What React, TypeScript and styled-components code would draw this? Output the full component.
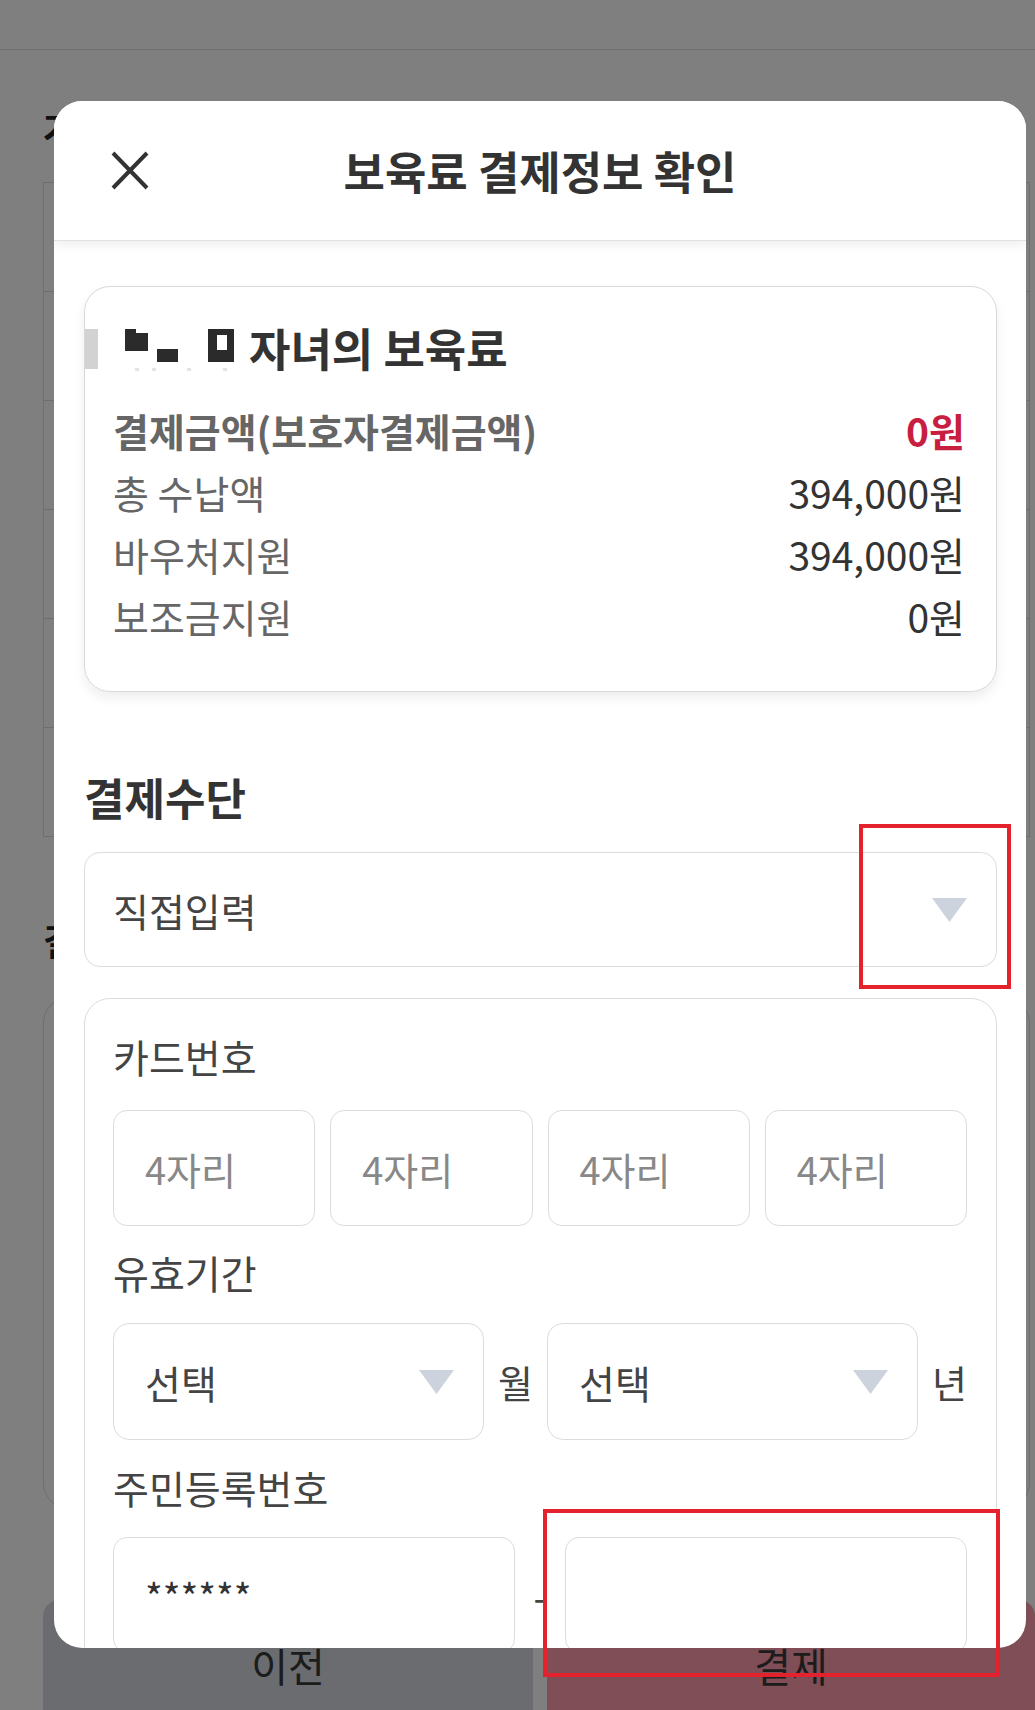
import React from 'react'
import styled, { createGlobalStyle } from 'styled-components'

const GlobalStyle = createGlobalStyle`
  html, body {
    margin: 0;
    padding: 0;
  }
  body {
    font-family: 'Noto Sans CJK KR', 'Noto Sans', sans-serif;
    background: #fff;
    color: #333;
  }
  * {
    box-sizing: border-box;
  }
`

const Screen = styled.div`
  position: relative;
  width: 1035px;
  height: 1710px;
  overflow: hidden;
  background: #fff;
`

/* ---------- page behind the dialog ---------- */

const Page = styled.div`
  display: flex;
  flex-direction: column;
  height: 100%;
`
const TopBar = styled.div`
  height: 50px;
  flex-shrink: 0;
  border-bottom: 1px solid #dcdcdc;
`
const PageBody = styled.div`
  display: flex;
  flex-direction: column;
  padding: 0 5px 0 43px;
`
const PageHeading = styled.h2<{ $top: number }>`
  margin: ${(p) => p.$top}px 0 0;
  font-size: 36px;
  line-height: 44px;
  font-weight: 700;
  color: #222;
`
const Table = styled.div`
  margin-top: 33px;
  border-top: 1px solid #dcdcdc;
  border-left: 1px solid #dcdcdc;
  border-right: 1px solid #dcdcdc;
`
const TableRow = styled.div`
  height: 109px;
  border-bottom: 1px solid #dcdcdc;
`
const InfoBox = styled.div`
  margin-top: 35px;
  height: 512px;
  border: 1px solid #dcdcdc;
  border-radius: 26px;
`
const ButtonBar = styled.div`
  margin-top: auto;
  display: grid;
  grid-template-columns: 490px 1fr;
  column-gap: 14px;
  padding-left: 43px;
  height: 110px;
`
const PageButton = styled.div<{ $primary?: boolean }>`
  background: ${(p) => (p.$primary ? '#ff9cac' : '#d6d8e0')};
  border-radius: ${(p) => (p.$primary ? '0 16px 0 0' : '16px 0 0 0')};
  display: flex;
  justify-content: center;
  padding-top: 40px;
  font-size: 40px;
  line-height: 50px;
  color: #383838;
`

/* ---------- dialog ---------- */

const Dim = styled.div`
  position: absolute;
  inset: 0;
  background: rgba(0, 0, 0, 0.5);
`
const Dialog = styled.div`
  position: absolute;
  left: 54px;
  top: 101px;
  width: 972px;
  height: 1547px;
  background: #fff;
  border-radius: 28px;
  overflow: hidden;
  display: flex;
  flex-direction: column;
`
const DialogHeader = styled.div`
  position: relative;
  z-index: 1;
  height: 140px;
  flex-shrink: 0;
  display: grid;
  grid-template-columns: 1fr auto 1fr;
  align-items: center;
  background: #fff;
  border-bottom: 1px solid #e2e2e2;
  box-shadow: 0 4px 10px rgba(0, 0, 0, 0.07);
`
const CloseButton = styled.div`
  padding-left: 57px;
  display: flex;
  align-items: center;
`
const DialogTitle = styled.h1`
  margin: 0;
  font-size: 45px;
  line-height: 1;
  font-weight: 700;
  color: #333;
`
const DialogBody = styled.div`
  padding: 45px 29px 0 30px;
`

const SummaryCard = styled.div`
  border: 1px solid #d8d8d8;
  border-radius: 26px;
  padding: 36px 31px 44px 28px;
  box-shadow: 0 6px 12px rgba(0, 0, 0, 0.07);
`
const CardTitle = styled.div`
  display: flex;
  align-items: center;
  margin-left: -28px;
  font-size: 45px;
  line-height: 50px;
  font-weight: 700;
  color: #333;
`
const Rows = styled.div`
  margin-top: 26px;
`
const Row = styled.div`
  display: flex;
  justify-content: space-between;
  font-size: 39px;
  line-height: 62px;
`
const RowLabel = styled.span<{ $strong?: boolean }>`
  color: #666;
  font-weight: ${(p) => (p.$strong ? 700 : 400)};
`
const RowValue = styled.span<{ $accent?: boolean }>`
  color: ${(p) => (p.$accent ? '#c81e3f' : '#333')};
  font-weight: ${(p) => (p.$accent ? 700 : 400)};
`

const SectionLabel = styled.div`
  margin: 80px 0 30px;
  font-size: 44px;
  line-height: 50px;
  font-weight: 700;
  color: #333;
`
const SelectBox = styled.div<{ $height: number; $pad: number }>`
  height: ${(p) => p.$height}px;
  border: 1px solid #dcdcdc;
  border-radius: 16px;
  padding: 0 29px 0 ${(p) => p.$pad}px;
  display: flex;
  align-items: center;
  justify-content: space-between;
  font-size: 39px;
  color: #444;
`

const FormCard = styled.div`
  margin-top: 31px;
  border: 1px solid #dcdcdc;
  border-radius: 26px;
  padding: 32px 29px 60px 28px;
`
const FieldLabel = styled.div<{ $top: number }>`
  margin: ${(p) => p.$top}px 0 0;
  font-size: 39px;
  line-height: 50px;
  color: #444;
`
const CardNumberRow = styled.div`
  margin-top: 29px;
  display: grid;
  grid-template-columns: repeat(4, 1fr);
  column-gap: 15px;
`
const ExpiryRow = styled.div`
  margin-top: 26px;
  display: grid;
  grid-template-columns: 1fr auto 1fr auto;
  column-gap: 14px;
  align-items: center;
`
const IdRow = styled.div`
  margin-top: 25px;
  display: grid;
  grid-template-columns: 1fr auto 1fr;
  column-gap: 18px;
  align-items: center;
`
const Unit = styled.span`
  font-size: 38px;
  color: #444;
`
const TextField = styled.input`
  width: 100%;
  height: 116px;
  border: 1px solid #dcdcdc;
  border-radius: 14px;
  padding: 0 0 0 31px;
  font-family: inherit;
  font-size: 38px;
  color: #333;
  background: #fff;
  outline: none;
  &::placeholder {
    color: #888;
  }
`

/* ---------- review marks drawn over the screenshot ---------- */

const Mark = styled.div<{ $l: number; $t: number; $w: number; $h: number }>`
  position: absolute;
  left: ${(p) => p.$l}px;
  top: ${(p) => p.$t}px;
  width: ${(p) => p.$w}px;
  height: ${(p) => p.$h}px;
  border: 4px solid #e3222d;
`

const CloseIcon = () => (
  <svg width="38" height="39" viewBox="0 0 38 39">
    <path d="M2 2 L36 37 M36 2 L2 37" stroke="#333" strokeWidth="4" fill="none" />
  </svg>
)

const Caret = () => (
  <svg width="35" height="24" viewBox="0 0 35 24">
    <polygon points="0,0 35,0 17.5,24" fill="#cdd3dd" />
  </svg>
)

const RedactedName = () => (
  <svg width="164" height="50" viewBox="0 0 164 50">
    <rect x="0" y="6" width="13" height="40" fill="#d2d2d2" />
    <rect x="40" y="6" width="11" height="22" fill="#2b2b2b" />
    <rect x="51" y="10" width="12" height="18" fill="#2b2b2b" />
    <rect x="72" y="26" width="21" height="13" fill="#2b2b2b" />
    <rect x="123" y="6" width="26" height="33" fill="#2b2b2b" />
    <rect x="132" y="12" width="10" height="15" fill="#fff" />
    <rect x="50" y="45" width="4" height="3" fill="#e4e4e4" />
    <rect x="67" y="45" width="4" height="3" fill="#e4e4e4" />
    <rect x="102" y="45" width="4" height="3" fill="#e4e4e4" />
    <rect x="138" y="45" width="4" height="3" fill="#e4e4e4" />
  </svg>
)

const summary = [
  { label: '총 수납액', value: '394,000원' },
  { label: '바우처지원', value: '394,000원' },
  { label: '보조금지원', value: '0원' },
]

export default function App() {
  return (
    <Screen>
      <GlobalStyle />
      <Page>
        <TopBar />
        <PageBody>
          <PageHeading $top={55}>가정보육</PageHeading>
          <Table>
            {Array.from({ length: 6 }).map((_, i) => (
              <TableRow key={i} />
            ))}
          </Table>
          <PageHeading $top={81}>결</PageHeading>
          <InfoBox />
        </PageBody>
        <ButtonBar>
          <PageButton>이전</PageButton>
          <PageButton $primary>결제</PageButton>
        </ButtonBar>
      </Page>

      <Dim />

      <Dialog>
        <DialogHeader>
          <CloseButton>
            <CloseIcon />
          </CloseButton>
          <DialogTitle>보육료 결제정보 확인</DialogTitle>
          <div />
        </DialogHeader>

        <DialogBody>
          <SummaryCard>
            <CardTitle>
              <RedactedName />
              자녀의 보육료
            </CardTitle>
            <Rows>
              <Row>
                <RowLabel $strong>결제금액(보호자결제금액)</RowLabel>
                <RowValue $accent>0원</RowValue>
              </Row>
              {summary.map((r) => (
                <Row key={r.label}>
                  <RowLabel>{r.label}</RowLabel>
                  <RowValue>{r.value}</RowValue>
                </Row>
              ))}
            </Rows>
          </SummaryCard>

          <SectionLabel>결제수단</SectionLabel>
          <SelectBox $height={115} $pad={28}>
            직접입력
            <Caret />
          </SelectBox>

          <FormCard>
            <FieldLabel $top={0}>카드번호</FieldLabel>
            <CardNumberRow>
              <TextField placeholder="4자리" readOnly />
              <TextField placeholder="4자리" readOnly />
              <TextField placeholder="4자리" readOnly />
              <TextField placeholder="4자리" readOnly />
            </CardNumberRow>

            <FieldLabel $top={21}>유효기간</FieldLabel>
            <ExpiryRow>
              <SelectBox $height={117} $pad={31}>
                선택
                <Caret />
              </SelectBox>
              <Unit>월</Unit>
              <SelectBox $height={117} $pad={31}>
                선택
                <Caret />
              </SelectBox>
              <Unit>년</Unit>
            </ExpiryRow>

            <FieldLabel $top={22}>주민등록번호</FieldLabel>
            <IdRow>
              <TextField value="******" readOnly />
              <Unit>-</Unit>
              <TextField readOnly />
            </IdRow>
          </FormCard>
        </DialogBody>
      </Dialog>

      <Mark $l={859} $t={824} $w={152} $h={165} />
      <Mark $l={543} $t={1509} $w={457} $h={168} />
    </Screen>
  )
}
